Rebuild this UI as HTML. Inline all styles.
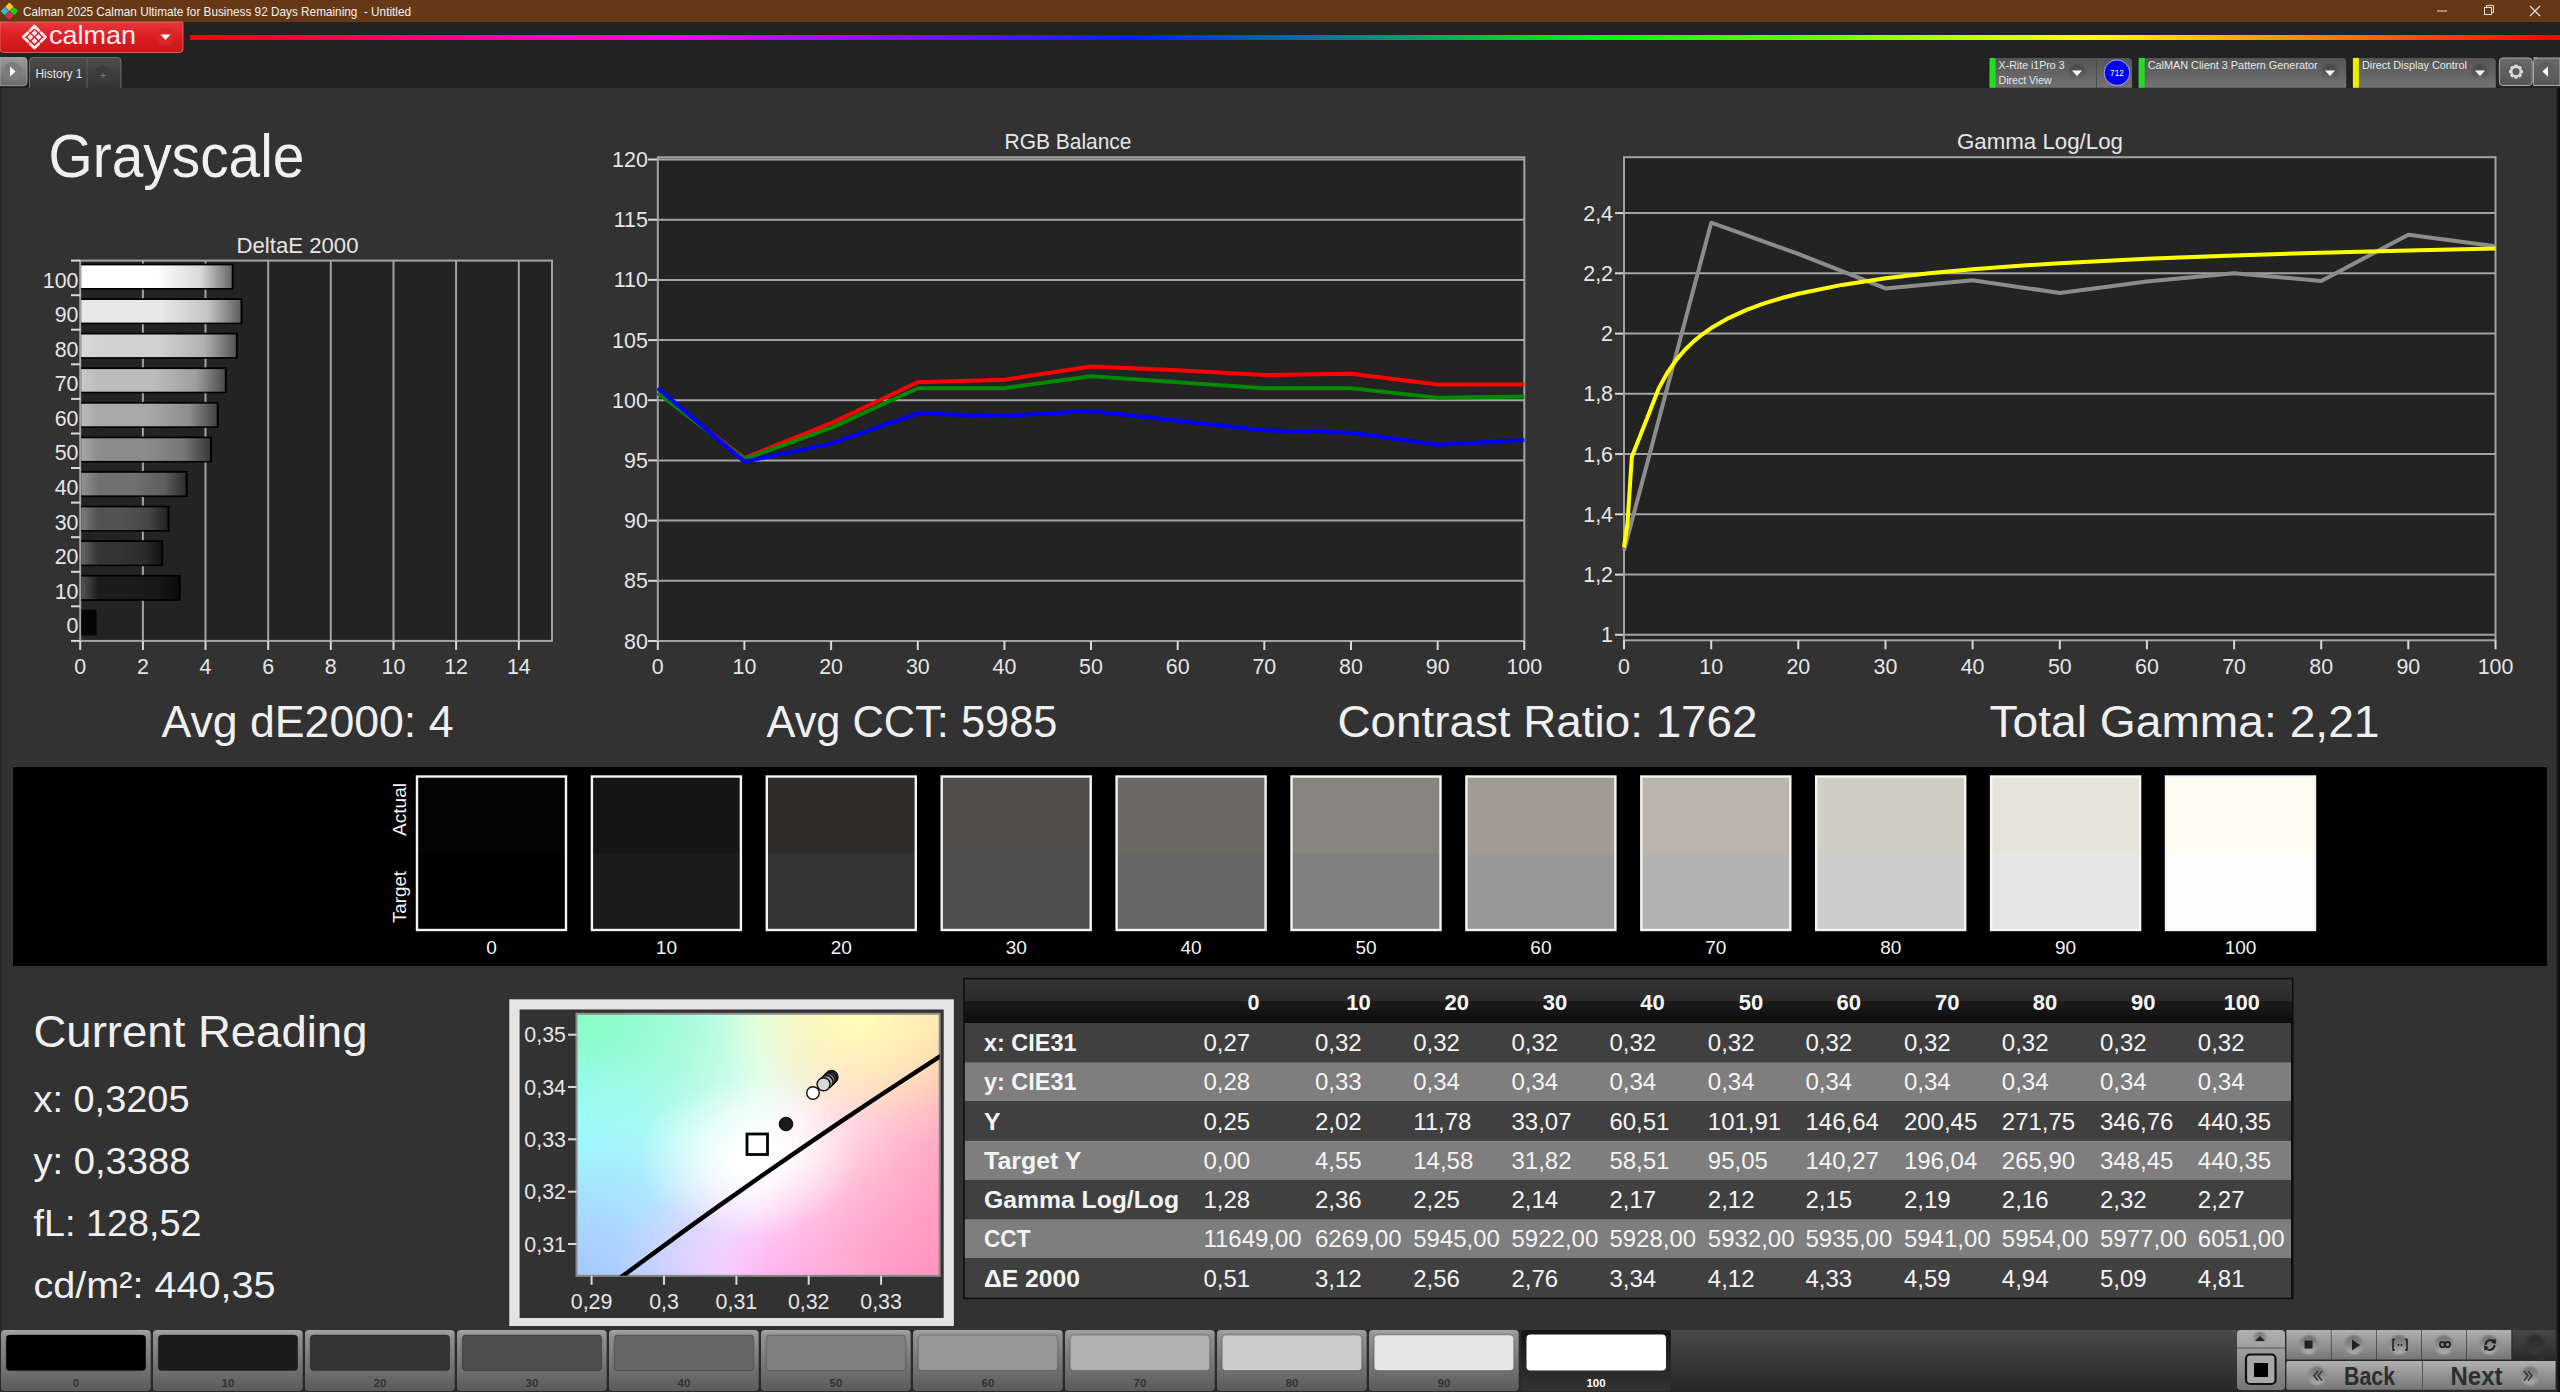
<!DOCTYPE html>
<html><head><meta charset="utf-8"><style>
html,body{margin:0;padding:0;width:2560px;height:1392px;overflow:hidden;background:#333;font-family:"Liberation Sans", sans-serif}
svg text{font-family:"Liberation Sans", sans-serif}
</style></head><body>
<div style="position:relative;width:2560px;height:1392px;overflow:hidden">
<div style="position:absolute;left:0px;top:0px;width:2560px;height:22px;background:#663816"></div><div style="position:absolute;left:0px;top:22px;width:2560px;height:66px;background:#222222"></div><div style="position:absolute;left:0px;top:88px;width:2560px;height:1242px;background:#323232"></div><div style="position:absolute;left:0px;top:1330px;width:2560px;height:62px;background:#323232"></div>
<svg width="2560" height="1392" viewBox="0 0 2560 1392" style="position:absolute;left:0;top:0">
<defs><linearGradient id="gRed" x1="0" y1="0" x2="0" y2="1"><stop offset="0" stop-color="#e8383c"/><stop offset="0.5" stop-color="#dc1e22"/><stop offset="1" stop-color="#c8161a"/></linearGradient><linearGradient id="gRain" x1="190" y1="0" x2="2560" y2="0" gradientUnits="userSpaceOnUse"><stop offset="0" stop-color="#ff0000"/><stop offset="0.2" stop-color="#ff00ff"/><stop offset="0.4" stop-color="#0020ff"/><stop offset="0.6" stop-color="#00ff00"/><stop offset="0.8" stop-color="#ffff00"/><stop offset="1" stop-color="#ff0000"/></linearGradient><linearGradient id="gBtnL" x1="0" y1="0" x2="0" y2="1"><stop offset="0" stop-color="#9a9a9a"/><stop offset="1" stop-color="#6a6a6a"/></linearGradient><linearGradient id="gTab" x1="0" y1="0" x2="0" y2="1"><stop offset="0" stop-color="#4c4c4c"/><stop offset="1" stop-color="#333333"/></linearGradient><linearGradient id="gDev" x1="0" y1="0" x2="0" y2="1"><stop offset="0" stop-color="#555555"/><stop offset="0.5" stop-color="#636363"/><stop offset="1" stop-color="#737373"/></linearGradient><linearGradient id="gDrop" x1="0" y1="0" x2="0" y2="1"><stop offset="0" stop-color="#454545"/><stop offset="0.6" stop-color="#5a5a5a"/><stop offset="1" stop-color="#707070"/></linearGradient><linearGradient id="gGear" x1="0" y1="0" x2="0" y2="1"><stop offset="0" stop-color="#6a6a6a"/><stop offset="1" stop-color="#555"/></linearGradient><linearGradient id="gBar10" x1="80.2" y1="0" x2="230.9" y2="0" gradientUnits="userSpaceOnUse"><stop offset="0" stop-color="rgb(255,255,255)"/><stop offset="0.119" stop-color="rgb(255,255,255)"/><stop offset="0.5" stop-color="rgb(255,255,255)"/><stop offset="0.8" stop-color="rgb(216,216,216)"/><stop offset="1" stop-color="rgb(107,107,107)"/></linearGradient><linearGradient id="gBar9" x1="80.2" y1="0" x2="239.7" y2="0" gradientUnits="userSpaceOnUse"><stop offset="0" stop-color="rgb(232,232,232)"/><stop offset="0.113" stop-color="rgb(232,232,232)"/><stop offset="0.5" stop-color="rgb(232,232,232)"/><stop offset="0.8" stop-color="rgb(197,197,197)"/><stop offset="1" stop-color="rgb(97,97,97)"/></linearGradient><linearGradient id="gBar8" x1="80.2" y1="0" x2="235.0" y2="0" gradientUnits="userSpaceOnUse"><stop offset="0" stop-color="rgb(217,217,217)"/><stop offset="0.116" stop-color="rgb(210,210,210)"/><stop offset="0.5" stop-color="rgb(210,210,210)"/><stop offset="0.8" stop-color="rgb(178,178,178)"/><stop offset="1" stop-color="rgb(88,88,88)"/></linearGradient><linearGradient id="gBar7" x1="80.2" y1="0" x2="224.0" y2="0" gradientUnits="userSpaceOnUse"><stop offset="0" stop-color="rgb(201,201,201)"/><stop offset="0.125" stop-color="rgb(188,188,188)"/><stop offset="0.5" stop-color="rgb(188,188,188)"/><stop offset="0.8" stop-color="rgb(159,159,159)"/><stop offset="1" stop-color="rgb(78,78,78)"/></linearGradient><linearGradient id="gBar6" x1="80.2" y1="0" x2="215.9" y2="0" gradientUnits="userSpaceOnUse"><stop offset="0" stop-color="rgb(187,187,187)"/><stop offset="0.133" stop-color="rgb(168,168,168)"/><stop offset="0.5" stop-color="rgb(168,168,168)"/><stop offset="0.8" stop-color="rgb(142,142,142)"/><stop offset="1" stop-color="rgb(70,70,70)"/></linearGradient><linearGradient id="gBar5" x1="80.2" y1="0" x2="209.3" y2="0" gradientUnits="userSpaceOnUse"><stop offset="0" stop-color="rgb(168,168,168)"/><stop offset="0.139" stop-color="rgb(140,140,140)"/><stop offset="0.5" stop-color="rgb(140,140,140)"/><stop offset="0.8" stop-color="rgb(119,119,119)"/><stop offset="1" stop-color="rgb(58,58,58)"/></linearGradient><linearGradient id="gBar4" x1="80.2" y1="0" x2="184.8" y2="0" gradientUnits="userSpaceOnUse"><stop offset="0" stop-color="rgb(148,148,148)"/><stop offset="0.172" stop-color="rgb(112,112,112)"/><stop offset="0.5" stop-color="rgb(112,112,112)"/><stop offset="0.8" stop-color="rgb(95,95,95)"/><stop offset="1" stop-color="rgb(47,47,47)"/></linearGradient><linearGradient id="gBar3" x1="80.2" y1="0" x2="166.7" y2="0" gradientUnits="userSpaceOnUse"><stop offset="0" stop-color="rgb(127,127,127)"/><stop offset="0.208" stop-color="rgb(82,82,82)"/><stop offset="0.5" stop-color="rgb(82,82,82)"/><stop offset="0.8" stop-color="rgb(69,69,69)"/><stop offset="1" stop-color="rgb(34,34,34)"/></linearGradient><linearGradient id="gBar2" x1="80.2" y1="0" x2="160.4" y2="0" gradientUnits="userSpaceOnUse"><stop offset="0" stop-color="rgb(106,106,106)"/><stop offset="0.224" stop-color="rgb(52,52,52)"/><stop offset="0.5" stop-color="rgb(52,52,52)"/><stop offset="0.8" stop-color="rgb(44,44,44)"/><stop offset="1" stop-color="rgb(21,21,21)"/></linearGradient><linearGradient id="gBar1" x1="80.2" y1="0" x2="177.9" y2="0" gradientUnits="userSpaceOnUse"><stop offset="0" stop-color="rgb(89,89,89)"/><stop offset="0.184" stop-color="rgb(28,28,28)"/><stop offset="0.5" stop-color="rgb(28,28,28)"/><stop offset="0.8" stop-color="rgb(23,23,23)"/><stop offset="1" stop-color="rgb(11,11,11)"/></linearGradient><linearGradient id="gBar0" x1="80.2" y1="0" x2="96.2" y2="0" gradientUnits="userSpaceOnUse"><stop offset="0" stop-color="rgb(74,74,74)"/><stop offset="0.250" stop-color="rgb(6,6,6)"/><stop offset="0.5" stop-color="rgb(6,6,6)"/><stop offset="0.8" stop-color="rgb(5,5,5)"/><stop offset="1" stop-color="rgb(2,2,2)"/></linearGradient><linearGradient id="cieBase" x1="0" y1="0" x2="1" y2="0"><stop offset="0" stop-color="#a8e8ff"/><stop offset="0.5" stop-color="#ffffff"/><stop offset="1" stop-color="#ffb0c8"/></linearGradient><radialGradient id="cieG" cx="0" cy="0" r="0.75"><stop offset="0" stop-color="#88ffc4" stop-opacity="1"/><stop offset="1" stop-color="#80ffc0" stop-opacity="0"/></radialGradient><radialGradient id="cieC" cx="0" cy="0.55" r="0.45"><stop offset="0" stop-color="#a0ffff" stop-opacity="1"/><stop offset="1" stop-color="#a0ffff" stop-opacity="0"/></radialGradient><radialGradient id="cieB" cx="0" cy="1" r="0.6"><stop offset="0" stop-color="#a8c8ff" stop-opacity="1"/><stop offset="1" stop-color="#a8c8ff" stop-opacity="0"/></radialGradient><radialGradient id="cieM" cx="0.55" cy="1" r="0.45"><stop offset="0" stop-color="#ffc0ff" stop-opacity="1"/><stop offset="1" stop-color="#ffc0ff" stop-opacity="0"/></radialGradient><radialGradient id="cieP" cx="1" cy="1" r="0.6"><stop offset="0" stop-color="#ff96c0" stop-opacity="1"/><stop offset="1" stop-color="#ff88b8" stop-opacity="0"/></radialGradient><radialGradient id="cieO" cx="1" cy="0" r="0.5"><stop offset="0" stop-color="#ffd8a8" stop-opacity="1"/><stop offset="1" stop-color="#ffd8a8" stop-opacity="0"/></radialGradient><radialGradient id="cieY" cx="0.78" cy="0.02" r="0.4"><stop offset="0" stop-color="#ffffb8" stop-opacity="1"/><stop offset="1" stop-color="#ffffb8" stop-opacity="0"/></radialGradient><radialGradient id="cieW" cx="0.47" cy="0.55" r="0.3"><stop offset="0" stop-color="#ffffff" stop-opacity="1"/><stop offset="1" stop-color="#ffffff" stop-opacity="0"/></radialGradient><linearGradient id="gHdr" x1="0" y1="0" x2="0" y2="1"><stop offset="0" stop-color="#343434"/><stop offset="0.5" stop-color="#2a2a2a"/><stop offset="0.5" stop-color="#1c1c1c"/><stop offset="1" stop-color="#0c0c0c"/></linearGradient><linearGradient id="gBB" x1="0" y1="0" x2="0" y2="1"><stop offset="0" stop-color="#a4a4a4"/><stop offset="0.1" stop-color="#909090"/><stop offset="0.7" stop-color="#6e6e6e"/><stop offset="1" stop-color="#5a5a5a"/></linearGradient><linearGradient id="gBBsel" x1="0" y1="0" x2="0" y2="1"><stop offset="0" stop-color="#161616"/><stop offset="1" stop-color="#333333"/></linearGradient><linearGradient id="gBBrest" x1="0" y1="0" x2="0" y2="1"><stop offset="0" stop-color="#4a4a4a"/><stop offset="1" stop-color="#262626"/></linearGradient><linearGradient id="gCtl" x1="0" y1="0" x2="0" y2="1"><stop offset="0" stop-color="#b0b0b0"/><stop offset="1" stop-color="#767676"/></linearGradient><linearGradient id="gKnob" x1="0" y1="0" x2="0" y2="1"><stop offset="0" stop-color="#6e6e6e"/><stop offset="0.55" stop-color="#8e8e8e"/><stop offset="1" stop-color="#b4b4b4"/></linearGradient><linearGradient id="gDarkBtn" x1="0" y1="0" x2="0" y2="1"><stop offset="0" stop-color="#474747"/><stop offset="1" stop-color="#2a2a2a"/></linearGradient><linearGradient id="gDarkKnob" x1="0" y1="0" x2="0" y2="1"><stop offset="0" stop-color="#2a2a2a"/><stop offset="1" stop-color="#3a3a3a"/></linearGradient><filter id="fBlur" x="-20%" y="-20%" width="140%" height="140%"><feGaussianBlur stdDeviation="0.8"/></filter><linearGradient id="gRS" x1="0" y1="0" x2="1" y2="0"><stop offset="0" stop-color="#333"/><stop offset="0.65" stop-color="#121212"/><stop offset="1" stop-color="#0e0e0e"/></linearGradient></defs>
<text x="23.0" y="16.3" font-size="13" textLength="388.0" lengthAdjust="spacingAndGlyphs" fill="#f2f2f2">Calman 2025 Calman Ultimate for Business 92 Days Remaining  - Untitled</text><line x1="2437.0" y1="11.0" x2="2447.0" y2="11.0" stroke="#e0e0e0" stroke-width="1"/><rect x="2484.5" y="7.5" width="7" height="7" fill="none" stroke="#e0e0e0" stroke-width="1"/><path d="M2486.5 7.5 V5.5 H2493.5 V12.5 H2491.5" fill="none" stroke="#e0e0e0" stroke-width="1"/><line x1="2530.0" y1="6.0" x2="2540.0" y2="16.0" stroke="#e0e0e0" stroke-width="1.2"/><line x1="2540.0" y1="6.0" x2="2530.0" y2="16.0" stroke="#e0e0e0" stroke-width="1.2"/><path d="M9.4 2.5999999999999996 L13.600000000000001 6.8 L9.4 11.0 L5.2 6.8 Z" fill="#f4c82a"/><path d="M4.7 6.8999999999999995 L8.9 11.1 L4.7 15.3 L0.5 11.1 Z" fill="#3cb4e0"/><path d="M14 6.8999999999999995 L18.2 11.1 L14 15.3 L9.8 11.1 Z" fill="#22c822"/><path d="M9.3 11.399999999999999 L13.5 15.6 L9.3 19.8 L5.1000000000000005 15.6 Z" fill="#e02a52"/><path d="M0 22 H183 V49 Q183 52.5 179.5 52.5 H3.5 Q0 52.5 0 49 Z" fill="url(#gRed)" stroke="#f06a6a" stroke-width="0.8"/><path d="M30.00 30.50 L34.40 26.10 L38.80 30.50 M41.00 32.70 L45.40 37.10 L41.00 41.50 M38.80 43.70 L34.40 48.10 L30.00 43.70 M27.80 41.50 L23.40 37.10 L27.80 32.70" fill="none" stroke="#fdecec" stroke-width="2.8" stroke-linecap="round" stroke-linejoin="round"/><g fill="#fdecec" stroke="#fdecec" stroke-width="0.8" stroke-linejoin="round"><path d="M34.40 30.60 L37.00 33.20 L34.40 35.80 L31.80 33.20 Z"/><path d="M30.30 34.50 L32.90 37.10 L30.30 39.70 L27.70 37.10 Z"/><path d="M38.50 34.50 L41.10 37.10 L38.50 39.70 L35.90 37.10 Z"/><path d="M34.40 38.40 L37.00 41.00 L34.40 43.60 L31.80 41.00 Z"/></g><text x="49.0" y="43.6" font-size="26" textLength="87.0" lengthAdjust="spacingAndGlyphs" fill="#fdeeee" letter-spacing="0">calman</text><circle cx="165.6" cy="36.8" r="9" fill="#d8262a"/><path d="M160.5 34.5 H170.5 L165.5 40 Z" fill="#fff"/><rect x="190.0" y="35.0" width="2370.0" height="5.0" fill="url(#gRain)"/><path d="M0 57.5 H23.5 Q27 57.5 27 61 V82 Q27 85.6 23.5 85.6 H0 Z" fill="url(#gBtnL)" stroke="#b0b0b0" stroke-width="0.8"/><circle cx="12.5" cy="71.5" r="9.5" fill="#7c7c7c"/><path d="M10 66.5 L15.5 71.5 L10 76.5 Z" fill="#fff"/><path d="M29.5 88 V61 Q29.5 57.5 33 57.5 H117.5 Q121 57.5 121 61 V88" fill="url(#gTab)" stroke="#7a7a7a" stroke-width="0.8"/><line x1="87.0" y1="58.0" x2="87.0" y2="88.0" stroke="#6a6a6a" stroke-width="0.8"/><text x="35.5" y="78.2" font-size="12" textLength="47.0" lengthAdjust="spacingAndGlyphs" fill="#e6e6e6">History 1</text><circle cx="103" cy="74.5" r="9" fill="#3c3c3c"/><path d="M100.5 75.5 H105.5 M103 73 V78" stroke="#777" stroke-width="1"/><path d="M1989.6 87.7 V61 Q1989.6 57.9 1992.6 57.9 H2128 Q2132 57.9 2132 61.9 V87.7 Z" fill="url(#gDev)"/><rect x="1989.6" y="57.9" width="6.0" height="29.8" fill="#22dd22"/><text x="1998.6" y="69.3" font-size="10" textLength="66.0" lengthAdjust="spacingAndGlyphs" fill="#e8e8e8">X-Rite i1Pro 3</text><text x="1998.6" y="83.9" font-size="10" textLength="53.0" lengthAdjust="spacingAndGlyphs" fill="#e8e8e8">Direct View</text><circle cx="2077" cy="72.5" r="8.5" fill="url(#gDrop)" filter="url(#fBlur)"/><path d="M2072 70.5 H2082 L2077 76 Z" fill="#fff"/><line x1="2096.5" y1="61.0" x2="2096.5" y2="87.7" stroke="#4a4a4a" stroke-width="1"/><circle cx="2117" cy="72.7" r="12.8" fill="#0000ee" stroke="#c8c8ff" stroke-width="0.8"/><text x="2117.0" y="76.0" font-size="9" text-anchor="middle" textLength="14.0" lengthAdjust="spacingAndGlyphs" fill="#fff">712</text><path d="M2138.7 87.7 V61 Q2138.7 57.9 2141.7 57.9 H2342.2 Q2346.2 57.9 2346.2 61.9 V87.7 Z" fill="url(#gDev)"/><rect x="2138.7" y="57.9" width="6.0" height="29.8" fill="#22dd22"/><text x="2147.7" y="69.3" font-size="10" textLength="170.0" lengthAdjust="spacingAndGlyphs" fill="#e8e8e8">CalMAN Client 3 Pattern Generator</text><circle cx="2330" cy="72.5" r="8.5" fill="url(#gDrop)" filter="url(#fBlur)"/><path d="M2325 70.5 H2335 L2330 76 Z" fill="#fff"/><path d="M2352.9 87.7 V61 Q2352.9 57.9 2355.9 57.9 H2491.8 Q2495.8 57.9 2495.8 61.9 V87.7 Z" fill="url(#gDev)"/><rect x="2352.9" y="57.9" width="6.0" height="29.8" fill="#eeee00"/><text x="2361.9" y="69.3" font-size="10" textLength="105.0" lengthAdjust="spacingAndGlyphs" fill="#e8e8e8">Direct Display Control</text><circle cx="2480" cy="72.5" r="8.5" fill="url(#gDrop)" filter="url(#fBlur)"/><path d="M2475 70.5 H2485 L2480 76 Z" fill="#fff"/><rect x="2499.4" y="58" width="32.8" height="27.5" rx="3.5" fill="url(#gGear)" stroke="#a8a8a8" stroke-width="1"/><circle cx="2516" cy="71.6" r="9.5" fill="#5e5e5e"/><g transform="translate(2516,71.6)" fill="#d8d8d8"><rect x="-1.6" y="-7" width="3.2" height="3" transform="rotate(0)"/><rect x="-1.6" y="-7" width="3.2" height="3" transform="rotate(45)"/><rect x="-1.6" y="-7" width="3.2" height="3" transform="rotate(90)"/><rect x="-1.6" y="-7" width="3.2" height="3" transform="rotate(135)"/><rect x="-1.6" y="-7" width="3.2" height="3" transform="rotate(180)"/><rect x="-1.6" y="-7" width="3.2" height="3" transform="rotate(225)"/><rect x="-1.6" y="-7" width="3.2" height="3" transform="rotate(270)"/><rect x="-1.6" y="-7" width="3.2" height="3" transform="rotate(315)"/><circle r="4.8" fill="none" stroke="#d8d8d8" stroke-width="2.4"/></g><path d="M2533.5 58 H2560 V85.5 H2533.5 Q2533.5 85.5 2533.5 82 V61.5 Q2533.5 58 2537 58 Z" fill="url(#gGear)" stroke="#a8a8a8" stroke-width="1"/><circle cx="2546" cy="71.6" r="9.5" fill="#5e5e5e"/><path d="M2548 66.5 L2542.5 71.6 L2548 76.7 Z" fill="#fff"/><rect x="0.0" y="88.0" width="1.3" height="1304.0" fill="#242424"/><text x="48.5" y="176.8" font-size="62" textLength="256.0" lengthAdjust="spacingAndGlyphs" fill="#f0f0f0">Grayscale</text><text x="236.5" y="252.9" font-size="21.4" textLength="122.0" lengthAdjust="spacingAndGlyphs" fill="#e6e6e6">DeltaE 2000</text><rect x="80.2" y="260.6" width="471.8" height="380.3" fill="#232323"/><line x1="142.9" y1="260.6" x2="142.9" y2="640.9" stroke="#a3a3a3" stroke-width="2"/><line x1="205.5" y1="260.6" x2="205.5" y2="640.9" stroke="#a3a3a3" stroke-width="2"/><line x1="268.2" y1="260.6" x2="268.2" y2="640.9" stroke="#a3a3a3" stroke-width="2"/><line x1="330.8" y1="260.6" x2="330.8" y2="640.9" stroke="#a3a3a3" stroke-width="2"/><line x1="393.5" y1="260.6" x2="393.5" y2="640.9" stroke="#a3a3a3" stroke-width="2"/><line x1="456.1" y1="260.6" x2="456.1" y2="640.9" stroke="#a3a3a3" stroke-width="2"/><line x1="518.8" y1="260.6" x2="518.8" y2="640.9" stroke="#a3a3a3" stroke-width="2"/><rect x="80.2" y="260.6" width="471.8" height="380.3" fill="none" stroke="#a3a3a3" stroke-width="2"/><line x1="71.0" y1="260.6" x2="80.2" y2="260.6" stroke="#d8d8d8" stroke-width="2"/><line x1="71.0" y1="295.2" x2="80.2" y2="295.2" stroke="#d8d8d8" stroke-width="2"/><line x1="71.0" y1="329.7" x2="80.2" y2="329.7" stroke="#d8d8d8" stroke-width="2"/><line x1="71.0" y1="364.3" x2="80.2" y2="364.3" stroke="#d8d8d8" stroke-width="2"/><line x1="71.0" y1="398.9" x2="80.2" y2="398.9" stroke="#d8d8d8" stroke-width="2"/><line x1="71.0" y1="433.5" x2="80.2" y2="433.5" stroke="#d8d8d8" stroke-width="2"/><line x1="71.0" y1="468.0" x2="80.2" y2="468.0" stroke="#d8d8d8" stroke-width="2"/><line x1="71.0" y1="502.6" x2="80.2" y2="502.6" stroke="#d8d8d8" stroke-width="2"/><line x1="71.0" y1="537.2" x2="80.2" y2="537.2" stroke="#d8d8d8" stroke-width="2"/><line x1="71.0" y1="571.8" x2="80.2" y2="571.8" stroke="#d8d8d8" stroke-width="2"/><line x1="71.0" y1="606.3" x2="80.2" y2="606.3" stroke="#d8d8d8" stroke-width="2"/><line x1="71.0" y1="640.9" x2="80.2" y2="640.9" stroke="#d8d8d8" stroke-width="2"/><line x1="80.2" y1="640.9" x2="80.2" y2="649.9" stroke="#d8d8d8" stroke-width="2"/><text x="80.2" y="674.0" font-size="21.4" text-anchor="middle" fill="#e6e6e6">0</text><line x1="142.9" y1="640.9" x2="142.9" y2="649.9" stroke="#d8d8d8" stroke-width="2"/><text x="142.9" y="674.0" font-size="21.4" text-anchor="middle" fill="#e6e6e6">2</text><line x1="205.5" y1="640.9" x2="205.5" y2="649.9" stroke="#d8d8d8" stroke-width="2"/><text x="205.5" y="674.0" font-size="21.4" text-anchor="middle" fill="#e6e6e6">4</text><line x1="268.2" y1="640.9" x2="268.2" y2="649.9" stroke="#d8d8d8" stroke-width="2"/><text x="268.2" y="674.0" font-size="21.4" text-anchor="middle" fill="#e6e6e6">6</text><line x1="330.8" y1="640.9" x2="330.8" y2="649.9" stroke="#d8d8d8" stroke-width="2"/><text x="330.8" y="674.0" font-size="21.4" text-anchor="middle" fill="#e6e6e6">8</text><line x1="393.5" y1="640.9" x2="393.5" y2="649.9" stroke="#d8d8d8" stroke-width="2"/><text x="393.5" y="674.0" font-size="21.4" text-anchor="middle" fill="#e6e6e6">10</text><line x1="456.1" y1="640.9" x2="456.1" y2="649.9" stroke="#d8d8d8" stroke-width="2"/><text x="456.1" y="674.0" font-size="21.4" text-anchor="middle" fill="#e6e6e6">12</text><line x1="518.8" y1="640.9" x2="518.8" y2="649.9" stroke="#d8d8d8" stroke-width="2"/><text x="518.8" y="674.0" font-size="21.4" text-anchor="middle" fill="#e6e6e6">14</text><text x="78.5" y="287.5" font-size="21.4" text-anchor="end" fill="#e6e6e6">100</text><rect x="81.2" y="263.6" width="152.5" height="26.0" fill="#000"/><rect x="81.2" y="265.4" width="150.5" height="22.6" fill="url(#gBar10)"/><text x="78.5" y="322.1" font-size="21.4" text-anchor="end" fill="#e6e6e6">90</text><rect x="81.2" y="298.2" width="161.3" height="26.0" fill="#000"/><rect x="81.2" y="300.0" width="159.3" height="22.6" fill="url(#gBar9)"/><text x="78.5" y="356.6" font-size="21.4" text-anchor="end" fill="#e6e6e6">80</text><rect x="81.2" y="332.7" width="156.6" height="26.0" fill="#000"/><rect x="81.2" y="334.5" width="154.6" height="22.6" fill="url(#gBar8)"/><text x="78.5" y="391.2" font-size="21.4" text-anchor="end" fill="#e6e6e6">70</text><rect x="81.2" y="367.3" width="145.6" height="26.0" fill="#000"/><rect x="81.2" y="369.1" width="143.6" height="22.6" fill="url(#gBar7)"/><text x="78.5" y="425.8" font-size="21.4" text-anchor="end" fill="#e6e6e6">60</text><rect x="81.2" y="401.9" width="137.5" height="26.0" fill="#000"/><rect x="81.2" y="403.7" width="135.5" height="22.6" fill="url(#gBar6)"/><text x="78.5" y="460.4" font-size="21.4" text-anchor="end" fill="#e6e6e6">50</text><rect x="81.2" y="436.5" width="130.9" height="26.0" fill="#000"/><rect x="81.2" y="438.3" width="128.9" height="22.6" fill="url(#gBar5)"/><text x="78.5" y="494.9" font-size="21.4" text-anchor="end" fill="#e6e6e6">40</text><rect x="81.2" y="471.0" width="106.4" height="26.0" fill="#000"/><rect x="81.2" y="472.8" width="104.4" height="22.6" fill="url(#gBar4)"/><text x="78.5" y="529.5" font-size="21.4" text-anchor="end" fill="#e6e6e6">30</text><rect x="81.2" y="505.6" width="88.3" height="26.0" fill="#000"/><rect x="81.2" y="507.4" width="86.3" height="22.6" fill="url(#gBar3)"/><text x="78.5" y="564.1" font-size="21.4" text-anchor="end" fill="#e6e6e6">20</text><rect x="81.2" y="540.2" width="82.0" height="26.0" fill="#000"/><rect x="81.2" y="542.0" width="80.0" height="22.6" fill="url(#gBar2)"/><text x="78.5" y="598.6" font-size="21.4" text-anchor="end" fill="#e6e6e6">10</text><rect x="81.2" y="574.8" width="99.5" height="26.0" fill="#000"/><rect x="81.2" y="576.6" width="97.5" height="22.6" fill="url(#gBar1)"/><text x="78.5" y="633.2" font-size="21.4" text-anchor="end" fill="#e6e6e6">0</text><rect x="81.4" y="609.7" width="15.2" height="25.6" fill="#050505"/><text x="1004.5" y="149.1" font-size="21.4" textLength="127.0" lengthAdjust="spacingAndGlyphs" fill="#e6e6e6">RGB Balance</text><rect x="657.8" y="157.3" width="866.5" height="483.7" fill="#232323"/><line x1="657.8" y1="641.0" x2="1524.3" y2="641.0" stroke="#a3a3a3" stroke-width="2"/><line x1="648.0" y1="641.0" x2="657.8" y2="641.0" stroke="#d8d8d8" stroke-width="2"/><text x="647.8" y="648.5" font-size="21.4" text-anchor="end" fill="#e6e6e6">80</text><line x1="657.8" y1="580.8" x2="1524.3" y2="580.8" stroke="#a3a3a3" stroke-width="2"/><line x1="648.0" y1="580.8" x2="657.8" y2="580.8" stroke="#d8d8d8" stroke-width="2"/><text x="647.8" y="588.3" font-size="21.4" text-anchor="end" fill="#e6e6e6">85</text><line x1="657.8" y1="520.6" x2="1524.3" y2="520.6" stroke="#a3a3a3" stroke-width="2"/><line x1="648.0" y1="520.6" x2="657.8" y2="520.6" stroke="#d8d8d8" stroke-width="2"/><text x="647.8" y="528.1" font-size="21.4" text-anchor="end" fill="#e6e6e6">90</text><line x1="657.8" y1="460.4" x2="1524.3" y2="460.4" stroke="#a3a3a3" stroke-width="2"/><line x1="648.0" y1="460.4" x2="657.8" y2="460.4" stroke="#d8d8d8" stroke-width="2"/><text x="647.8" y="467.9" font-size="21.4" text-anchor="end" fill="#e6e6e6">95</text><line x1="657.8" y1="400.2" x2="1524.3" y2="400.2" stroke="#a3a3a3" stroke-width="2"/><line x1="648.0" y1="400.2" x2="657.8" y2="400.2" stroke="#d8d8d8" stroke-width="2"/><text x="647.8" y="407.8" font-size="21.4" text-anchor="end" fill="#e6e6e6">100</text><line x1="657.8" y1="340.1" x2="1524.3" y2="340.1" stroke="#a3a3a3" stroke-width="2"/><line x1="648.0" y1="340.1" x2="657.8" y2="340.1" stroke="#d8d8d8" stroke-width="2"/><text x="647.8" y="347.6" font-size="21.4" text-anchor="end" fill="#e6e6e6">105</text><line x1="657.8" y1="279.9" x2="1524.3" y2="279.9" stroke="#a3a3a3" stroke-width="2"/><line x1="648.0" y1="279.9" x2="657.8" y2="279.9" stroke="#d8d8d8" stroke-width="2"/><text x="647.8" y="287.4" font-size="21.4" text-anchor="end" fill="#e6e6e6">110</text><line x1="657.8" y1="219.7" x2="1524.3" y2="219.7" stroke="#a3a3a3" stroke-width="2"/><line x1="648.0" y1="219.7" x2="657.8" y2="219.7" stroke="#d8d8d8" stroke-width="2"/><text x="647.8" y="227.2" font-size="21.4" text-anchor="end" fill="#e6e6e6">115</text><line x1="657.8" y1="159.5" x2="1524.3" y2="159.5" stroke="#a3a3a3" stroke-width="2"/><line x1="648.0" y1="159.5" x2="657.8" y2="159.5" stroke="#d8d8d8" stroke-width="2"/><text x="647.8" y="167.0" font-size="21.4" text-anchor="end" fill="#e6e6e6">120</text><rect x="657.8" y="157.3" width="866.5" height="483.7" fill="none" stroke="#a3a3a3" stroke-width="2"/><line x1="657.8" y1="641.0" x2="657.8" y2="650.0" stroke="#d8d8d8" stroke-width="2"/><text x="657.8" y="674.0" font-size="21.4" text-anchor="middle" fill="#e6e6e6">0</text><line x1="744.4" y1="641.0" x2="744.4" y2="650.0" stroke="#d8d8d8" stroke-width="2"/><text x="744.4" y="674.0" font-size="21.4" text-anchor="middle" fill="#e6e6e6">10</text><line x1="831.1" y1="641.0" x2="831.1" y2="650.0" stroke="#d8d8d8" stroke-width="2"/><text x="831.1" y="674.0" font-size="21.4" text-anchor="middle" fill="#e6e6e6">20</text><line x1="917.8" y1="641.0" x2="917.8" y2="650.0" stroke="#d8d8d8" stroke-width="2"/><text x="917.8" y="674.0" font-size="21.4" text-anchor="middle" fill="#e6e6e6">30</text><line x1="1004.4" y1="641.0" x2="1004.4" y2="650.0" stroke="#d8d8d8" stroke-width="2"/><text x="1004.4" y="674.0" font-size="21.4" text-anchor="middle" fill="#e6e6e6">40</text><line x1="1091.0" y1="641.0" x2="1091.0" y2="650.0" stroke="#d8d8d8" stroke-width="2"/><text x="1091.0" y="674.0" font-size="21.4" text-anchor="middle" fill="#e6e6e6">50</text><line x1="1177.7" y1="641.0" x2="1177.7" y2="650.0" stroke="#d8d8d8" stroke-width="2"/><text x="1177.7" y="674.0" font-size="21.4" text-anchor="middle" fill="#e6e6e6">60</text><line x1="1264.3" y1="641.0" x2="1264.3" y2="650.0" stroke="#d8d8d8" stroke-width="2"/><text x="1264.3" y="674.0" font-size="21.4" text-anchor="middle" fill="#e6e6e6">70</text><line x1="1351.0" y1="641.0" x2="1351.0" y2="650.0" stroke="#d8d8d8" stroke-width="2"/><text x="1351.0" y="674.0" font-size="21.4" text-anchor="middle" fill="#e6e6e6">80</text><line x1="1437.7" y1="641.0" x2="1437.7" y2="650.0" stroke="#d8d8d8" stroke-width="2"/><text x="1437.7" y="674.0" font-size="21.4" text-anchor="middle" fill="#e6e6e6">90</text><line x1="1524.3" y1="641.0" x2="1524.3" y2="650.0" stroke="#d8d8d8" stroke-width="2"/><text x="1524.3" y="674.0" font-size="21.4" text-anchor="middle" fill="#e6e6e6">100</text><polyline points="657.8,393.0 744.4,458.0 831.1,423.1 917.8,382.2 1004.4,379.8 1091.0,366.5 1177.7,370.2 1264.3,375.0 1351.0,373.8 1437.7,384.6 1524.3,384.6" fill="none" stroke="#ff0000" stroke-width="4" stroke-linejoin="round"/><polyline points="657.8,393.0 744.4,459.2 831.1,427.9 917.8,388.2 1004.4,388.2 1091.0,376.2 1177.7,382.2 1264.3,388.2 1351.0,388.2 1437.7,397.8 1524.3,396.6" fill="none" stroke="#008800" stroke-width="4" stroke-linejoin="round"/><polyline points="657.8,388.2 744.4,461.6 831.1,443.6 917.8,413.5 1004.4,415.9 1091.0,411.1 1177.7,420.7 1264.3,430.3 1351.0,432.8 1437.7,444.8 1524.3,440.0" fill="none" stroke="#0000ff" stroke-width="4" stroke-linejoin="round"/><text x="1957.0" y="149.1" font-size="21.4" textLength="166.0" lengthAdjust="spacingAndGlyphs" fill="#e6e6e6">Gamma Log/Log</text><rect x="1624.0" y="157.2" width="871.5" height="483.1" fill="#232323"/><line x1="1624.0" y1="634.8" x2="2495.5" y2="634.8" stroke="#a3a3a3" stroke-width="2"/><line x1="1615.0" y1="634.8" x2="1624.0" y2="634.8" stroke="#d8d8d8" stroke-width="2"/><text x="1613.0" y="642.3" font-size="21.4" text-anchor="end" fill="#e6e6e6">1</text><line x1="1624.0" y1="574.6" x2="2495.5" y2="574.6" stroke="#a3a3a3" stroke-width="2"/><line x1="1615.0" y1="574.6" x2="1624.0" y2="574.6" stroke="#d8d8d8" stroke-width="2"/><text x="1613.0" y="582.1" font-size="21.4" text-anchor="end" fill="#e6e6e6">1,2</text><line x1="1624.0" y1="514.3" x2="2495.5" y2="514.3" stroke="#a3a3a3" stroke-width="2"/><line x1="1615.0" y1="514.3" x2="1624.0" y2="514.3" stroke="#d8d8d8" stroke-width="2"/><text x="1613.0" y="521.8" font-size="21.4" text-anchor="end" fill="#e6e6e6">1,4</text><line x1="1624.0" y1="454.1" x2="2495.5" y2="454.1" stroke="#a3a3a3" stroke-width="2"/><line x1="1615.0" y1="454.1" x2="1624.0" y2="454.1" stroke="#d8d8d8" stroke-width="2"/><text x="1613.0" y="461.6" font-size="21.4" text-anchor="end" fill="#e6e6e6">1,6</text><line x1="1624.0" y1="393.8" x2="2495.5" y2="393.8" stroke="#a3a3a3" stroke-width="2"/><line x1="1615.0" y1="393.8" x2="1624.0" y2="393.8" stroke="#d8d8d8" stroke-width="2"/><text x="1613.0" y="401.3" font-size="21.4" text-anchor="end" fill="#e6e6e6">1,8</text><line x1="1624.0" y1="333.6" x2="2495.5" y2="333.6" stroke="#a3a3a3" stroke-width="2"/><line x1="1615.0" y1="333.6" x2="1624.0" y2="333.6" stroke="#d8d8d8" stroke-width="2"/><text x="1613.0" y="341.1" font-size="21.4" text-anchor="end" fill="#e6e6e6">2</text><line x1="1624.0" y1="273.3" x2="2495.5" y2="273.3" stroke="#a3a3a3" stroke-width="2"/><line x1="1615.0" y1="273.3" x2="1624.0" y2="273.3" stroke="#d8d8d8" stroke-width="2"/><text x="1613.0" y="280.8" font-size="21.4" text-anchor="end" fill="#e6e6e6">2,2</text><line x1="1624.0" y1="213.1" x2="2495.5" y2="213.1" stroke="#a3a3a3" stroke-width="2"/><line x1="1615.0" y1="213.1" x2="1624.0" y2="213.1" stroke="#d8d8d8" stroke-width="2"/><text x="1613.0" y="220.6" font-size="21.4" text-anchor="end" fill="#e6e6e6">2,4</text><rect x="1624.0" y="157.2" width="871.5" height="483.1" fill="none" stroke="#a3a3a3" stroke-width="2"/><line x1="1624.0" y1="640.3" x2="1624.0" y2="649.3" stroke="#d8d8d8" stroke-width="2"/><text x="1624.0" y="674.0" font-size="21.4" text-anchor="middle" fill="#e6e6e6">0</text><line x1="1711.2" y1="640.3" x2="1711.2" y2="649.3" stroke="#d8d8d8" stroke-width="2"/><text x="1711.2" y="674.0" font-size="21.4" text-anchor="middle" fill="#e6e6e6">10</text><line x1="1798.3" y1="640.3" x2="1798.3" y2="649.3" stroke="#d8d8d8" stroke-width="2"/><text x="1798.3" y="674.0" font-size="21.4" text-anchor="middle" fill="#e6e6e6">20</text><line x1="1885.5" y1="640.3" x2="1885.5" y2="649.3" stroke="#d8d8d8" stroke-width="2"/><text x="1885.5" y="674.0" font-size="21.4" text-anchor="middle" fill="#e6e6e6">30</text><line x1="1972.6" y1="640.3" x2="1972.6" y2="649.3" stroke="#d8d8d8" stroke-width="2"/><text x="1972.6" y="674.0" font-size="21.4" text-anchor="middle" fill="#e6e6e6">40</text><line x1="2059.8" y1="640.3" x2="2059.8" y2="649.3" stroke="#d8d8d8" stroke-width="2"/><text x="2059.8" y="674.0" font-size="21.4" text-anchor="middle" fill="#e6e6e6">50</text><line x1="2146.9" y1="640.3" x2="2146.9" y2="649.3" stroke="#d8d8d8" stroke-width="2"/><text x="2146.9" y="674.0" font-size="21.4" text-anchor="middle" fill="#e6e6e6">60</text><line x1="2234.1" y1="640.3" x2="2234.1" y2="649.3" stroke="#d8d8d8" stroke-width="2"/><text x="2234.1" y="674.0" font-size="21.4" text-anchor="middle" fill="#e6e6e6">70</text><line x1="2321.2" y1="640.3" x2="2321.2" y2="649.3" stroke="#d8d8d8" stroke-width="2"/><text x="2321.2" y="674.0" font-size="21.4" text-anchor="middle" fill="#e6e6e6">80</text><line x1="2408.3" y1="640.3" x2="2408.3" y2="649.3" stroke="#d8d8d8" stroke-width="2"/><text x="2408.3" y="674.0" font-size="21.4" text-anchor="middle" fill="#e6e6e6">90</text><line x1="2495.5" y1="640.3" x2="2495.5" y2="649.3" stroke="#d8d8d8" stroke-width="2"/><text x="2495.5" y="674.0" font-size="21.4" text-anchor="middle" fill="#e6e6e6">100</text><polyline points="1624.0,550.5 1711.2,222.7 1798.3,253.8 1885.5,288.4 1972.6,280.3 2059.8,292.9 2146.9,281.5 2234.1,273.3 2321.2,280.9 2408.3,234.8 2495.5,246.2" fill="none" stroke="#8c8c8c" stroke-width="4" stroke-linejoin="round"/><polyline points="1624.0,547.4 1627.5,523.4 1631.8,457.1 1647.5,417.2 1658.9,388.1 1667.6,372.3 1676.3,359.9 1685.0,349.8 1693.7,341.4 1702.4,334.3 1711.2,328.1 1728.6,318.1 1746.0,310.1 1763.4,303.7 1780.9,298.3 1798.3,293.8 1841.9,284.9 1885.5,278.3 1929.0,273.3 1972.6,269.2 2016.2,265.9 2059.8,263.2 2146.9,258.7 2234.1,255.4 2321.2,252.7 2408.3,250.5 2495.5,248.6" fill="none" stroke="#ffff00" stroke-width="4" stroke-linejoin="round"/><text x="161.5" y="737.0" font-size="44" textLength="292.0" lengthAdjust="spacingAndGlyphs" fill="#f0f0f0">Avg dE2000: 4</text><text x="766.5" y="737.0" font-size="44" textLength="291.0" lengthAdjust="spacingAndGlyphs" fill="#f0f0f0">Avg CCT: 5985</text><text x="1337.5" y="737.0" font-size="44" textLength="420.0" lengthAdjust="spacingAndGlyphs" fill="#f0f0f0">Contrast Ratio: 1762</text><text x="1989.5" y="737.0" font-size="44" textLength="390.0" lengthAdjust="spacingAndGlyphs" fill="#f0f0f0">Total Gamma: 2,21</text><rect x="13.0" y="767.0" width="2534.0" height="199.0" fill="#000000"/><rect x="417.0" y="776.0" width="149.0" height="78.0" fill="rgb(4, 4, 4)"/><rect x="417.0" y="853.0" width="149.0" height="78.0" fill="rgb(1, 1, 1)"/><rect x="417.0" y="776.5" width="149" height="153.5" fill="none" stroke="#f4f4f4" stroke-width="2.4"/><text x="491.5" y="954.0" font-size="19" text-anchor="middle" fill="#f4f4f4">0</text><rect x="591.9" y="776.0" width="149.0" height="78.0" fill="rgb(22, 21, 22)"/><rect x="591.9" y="853.0" width="149.0" height="78.0" fill="rgb(28, 28, 28)"/><rect x="591.9" y="776.5" width="149" height="153.5" fill="none" stroke="#f4f4f4" stroke-width="2.4"/><text x="666.4" y="954.0" font-size="19" text-anchor="middle" fill="#f4f4f4">10</text><rect x="766.8" y="776.0" width="149.0" height="78.0" fill="rgb(46, 45, 43)"/><rect x="766.8" y="853.0" width="149.0" height="78.0" fill="rgb(51, 51, 51)"/><rect x="766.8" y="776.5" width="149" height="153.5" fill="none" stroke="#f4f4f4" stroke-width="2.4"/><text x="841.3" y="954.0" font-size="19" text-anchor="middle" fill="#f4f4f4">20</text><rect x="941.7" y="776.0" width="149.0" height="78.0" fill="rgb(80, 78, 74)"/><rect x="941.7" y="853.0" width="149.0" height="78.0" fill="rgb(77, 77, 77)"/><rect x="941.7" y="776.5" width="149" height="153.5" fill="none" stroke="#f4f4f4" stroke-width="2.4"/><text x="1016.2" y="954.0" font-size="19" text-anchor="middle" fill="#f4f4f4">30</text><rect x="1116.6" y="776.0" width="149.0" height="78.0" fill="rgb(108, 106, 100)"/><rect x="1116.6" y="853.0" width="149.0" height="78.0" fill="rgb(102, 102, 102)"/><rect x="1116.6" y="776.5" width="149" height="153.5" fill="none" stroke="#f4f4f4" stroke-width="2.4"/><text x="1191.1" y="954.0" font-size="19" text-anchor="middle" fill="#f4f4f4">40</text><rect x="1291.5" y="776.0" width="149.0" height="78.0" fill="rgb(135, 133, 126)"/><rect x="1291.5" y="853.0" width="149.0" height="78.0" fill="rgb(128, 128, 128)"/><rect x="1291.5" y="776.5" width="149" height="153.5" fill="none" stroke="#f4f4f4" stroke-width="2.4"/><text x="1366.0" y="954.0" font-size="19" text-anchor="middle" fill="#f4f4f4">50</text><rect x="1466.4" y="776.0" width="149.0" height="78.0" fill="rgb(160, 156, 148)"/><rect x="1466.4" y="853.0" width="149.0" height="78.0" fill="rgb(153, 153, 153)"/><rect x="1466.4" y="776.5" width="149" height="153.5" fill="none" stroke="#f4f4f4" stroke-width="2.4"/><text x="1540.9" y="954.0" font-size="19" text-anchor="middle" fill="#f4f4f4">60</text><rect x="1641.3" y="776.0" width="149.0" height="78.0" fill="rgb(185, 181, 172)"/><rect x="1641.3" y="853.0" width="149.0" height="78.0" fill="rgb(179, 179, 179)"/><rect x="1641.3" y="776.5" width="149" height="153.5" fill="none" stroke="#f4f4f4" stroke-width="2.4"/><text x="1715.8" y="954.0" font-size="19" text-anchor="middle" fill="#f4f4f4">70</text><rect x="1816.2" y="776.0" width="149.0" height="78.0" fill="rgb(208, 206, 196)"/><rect x="1816.2" y="853.0" width="149.0" height="78.0" fill="rgb(204, 204, 204)"/><rect x="1816.2" y="776.5" width="149" height="153.5" fill="none" stroke="#f4f4f4" stroke-width="2.4"/><text x="1890.7" y="954.0" font-size="19" text-anchor="middle" fill="#f4f4f4">80</text><rect x="1991.1" y="776.0" width="149.0" height="78.0" fill="rgb(230, 228, 218)"/><rect x="1991.1" y="853.0" width="149.0" height="78.0" fill="rgb(230, 230, 230)"/><rect x="1991.1" y="776.5" width="149" height="153.5" fill="none" stroke="#f4f4f4" stroke-width="2.4"/><text x="2065.6" y="954.0" font-size="19" text-anchor="middle" fill="#f4f4f4">90</text><rect x="2166.0" y="776.0" width="149.0" height="78.0" fill="rgb(255, 253, 242)"/><rect x="2166.0" y="853.0" width="149.0" height="78.0" fill="rgb(253, 253, 253)"/><rect x="2166.0" y="776.5" width="149" height="153.5" fill="none" stroke="#f4f4f4" stroke-width="2.4"/><text x="2240.5" y="954.0" font-size="19" text-anchor="middle" fill="#f4f4f4">100</text><text transform="translate(406,836) rotate(-90)" font-size="19" fill="#f4f4f4" textLength="53" lengthAdjust="spacingAndGlyphs">Actual</text><text transform="translate(406,923) rotate(-90)" font-size="19" fill="#f4f4f4" textLength="52" lengthAdjust="spacingAndGlyphs">Target</text><text x="33.5" y="1047.0" font-size="44.3" textLength="334.0" lengthAdjust="spacingAndGlyphs" fill="#f0f0f0">Current Reading</text><text x="33.5" y="1111.7" font-size="37" textLength="156.0" lengthAdjust="spacingAndGlyphs" fill="#f0f0f0">x: 0,3205</text><text x="33.5" y="1173.6" font-size="37" textLength="157.0" lengthAdjust="spacingAndGlyphs" fill="#f0f0f0">y: 0,3388</text><text x="33.5" y="1235.6" font-size="37" textLength="168.0" lengthAdjust="spacingAndGlyphs" fill="#f0f0f0">fL: 128,52</text><text x="33.5" y="1298.0" font-size="37" textLength="242.0" lengthAdjust="spacingAndGlyphs" fill="#f0f0f0">cd/m²: 440,35</text><rect x="509.3" y="999.3" width="444.6" height="326.7" fill="#e4e4e4"/><rect x="519.6" y="1009.5" width="424.1" height="308.5" fill="#323232"/><rect x="576.5" y="1013.7" width="363.2" height="262.1" fill="url(#cieBase)"/><rect x="576.5" y="1013.7" width="363.2" height="262.1" fill="url(#cieG)"/><rect x="576.5" y="1013.7" width="363.2" height="262.1" fill="url(#cieC)"/><rect x="576.5" y="1013.7" width="363.2" height="262.1" fill="url(#cieB)"/><rect x="576.5" y="1013.7" width="363.2" height="262.1" fill="url(#cieM)"/><rect x="576.5" y="1013.7" width="363.2" height="262.1" fill="url(#cieP)"/><rect x="576.5" y="1013.7" width="363.2" height="262.1" fill="url(#cieO)"/><rect x="576.5" y="1013.7" width="363.2" height="262.1" fill="url(#cieY)"/><rect x="576.5" y="1013.7" width="363.2" height="262.1" fill="url(#cieW)"/><rect x="576.5" y="1013.7" width="363.2" height="262.1" fill="none" stroke="#8a8a8a" stroke-width="2"/><line x1="591.6" y1="1275.8" x2="591.6" y2="1284.8" stroke="#d8d8d8" stroke-width="2"/><text x="591.6" y="1309.0" font-size="21.4" text-anchor="middle" fill="#e6e6e6">0,29</text><line x1="664.0" y1="1275.8" x2="664.0" y2="1284.8" stroke="#d8d8d8" stroke-width="2"/><text x="664.0" y="1309.0" font-size="21.4" text-anchor="middle" fill="#e6e6e6">0,3</text><line x1="736.4" y1="1275.8" x2="736.4" y2="1284.8" stroke="#d8d8d8" stroke-width="2"/><text x="736.4" y="1309.0" font-size="21.4" text-anchor="middle" fill="#e6e6e6">0,31</text><line x1="808.7" y1="1275.8" x2="808.7" y2="1284.8" stroke="#d8d8d8" stroke-width="2"/><text x="808.7" y="1309.0" font-size="21.4" text-anchor="middle" fill="#e6e6e6">0,32</text><line x1="881.1" y1="1275.8" x2="881.1" y2="1284.8" stroke="#d8d8d8" stroke-width="2"/><text x="881.1" y="1309.0" font-size="21.4" text-anchor="middle" fill="#e6e6e6">0,33</text><line x1="568.0" y1="1244.0" x2="576.5" y2="1244.0" stroke="#d8d8d8" stroke-width="2"/><text x="566.0" y="1251.5" font-size="21.4" text-anchor="end" fill="#e6e6e6">0,31</text><line x1="568.0" y1="1191.7" x2="576.5" y2="1191.7" stroke="#d8d8d8" stroke-width="2"/><text x="566.0" y="1199.2" font-size="21.4" text-anchor="end" fill="#e6e6e6">0,32</text><line x1="568.0" y1="1139.3" x2="576.5" y2="1139.3" stroke="#d8d8d8" stroke-width="2"/><text x="566.0" y="1146.8" font-size="21.4" text-anchor="end" fill="#e6e6e6">0,33</text><line x1="568.0" y1="1087.0" x2="576.5" y2="1087.0" stroke="#d8d8d8" stroke-width="2"/><text x="566.0" y="1094.5" font-size="21.4" text-anchor="end" fill="#e6e6e6">0,34</text><line x1="568.0" y1="1034.7" x2="576.5" y2="1034.7" stroke="#d8d8d8" stroke-width="2"/><text x="566.0" y="1042.2" font-size="21.4" text-anchor="end" fill="#e6e6e6">0,35</text><clipPath id="cieClip"><rect x="576.5" y="1013.7" width="363.2" height="262.1"/></clipPath><polyline points="610.0,1285.4 640.0,1263.2 680.0,1233.9 720.0,1205.2 760.0,1177.0 800.0,1149.3 840.0,1122.1 880.0,1095.5 920.0,1069.3 950.0,1050.0" fill="none" stroke="#000" stroke-width="4.5" clip-path="url(#cieClip)"/><rect x="747" y="1134" width="20.5" height="20.5" fill="#fff" stroke="#000" stroke-width="2.8"/><circle cx="786" cy="1124" r="6.8" fill="#1a1a1a" stroke="#000" stroke-width="1"/><circle cx="831.5" cy="1077" r="6.5" fill="#333" stroke="#111" stroke-width="1.4"/><circle cx="830" cy="1078.5" r="6.5" fill="#555" stroke="#111" stroke-width="1.4"/><circle cx="828.5" cy="1080" r="6.5" fill="#888" stroke="#111" stroke-width="1.4"/><circle cx="826.5" cy="1082" r="6.5" fill="#aaa" stroke="#111" stroke-width="1.4"/><circle cx="823.6" cy="1084.3" r="6.5" fill="#d8d8d8" stroke="#111" stroke-width="1.4"/><circle cx="813" cy="1093" r="6.3" fill="#ffffff" stroke="#111" stroke-width="1.4"/><rect x="963.3" y="977.8" width="1330.2" height="321.4" fill="#0e0e0e"/><rect x="964.8" y="979.3" width="1327.2" height="43.6" fill="url(#gHdr)"/><text x="1253.5" y="1010.2" font-size="22.3" text-anchor="middle" font-weight="700" textLength="12.0" lengthAdjust="spacingAndGlyphs" fill="#f6f6f6">0</text><text x="1358.4" y="1010.2" font-size="22.3" text-anchor="middle" font-weight="700" textLength="24.5" lengthAdjust="spacingAndGlyphs" fill="#f6f6f6">10</text><text x="1456.7" y="1010.2" font-size="22.3" text-anchor="middle" font-weight="700" textLength="24.5" lengthAdjust="spacingAndGlyphs" fill="#f6f6f6">20</text><text x="1555.0" y="1010.2" font-size="22.3" text-anchor="middle" font-weight="700" textLength="24.5" lengthAdjust="spacingAndGlyphs" fill="#f6f6f6">30</text><text x="1652.5" y="1010.2" font-size="22.3" text-anchor="middle" font-weight="700" textLength="24.5" lengthAdjust="spacingAndGlyphs" fill="#f6f6f6">40</text><text x="1751.0" y="1010.2" font-size="22.3" text-anchor="middle" font-weight="700" textLength="24.5" lengthAdjust="spacingAndGlyphs" fill="#f6f6f6">50</text><text x="1848.8" y="1010.2" font-size="22.3" text-anchor="middle" font-weight="700" textLength="24.5" lengthAdjust="spacingAndGlyphs" fill="#f6f6f6">60</text><text x="1947.3" y="1010.2" font-size="22.3" text-anchor="middle" font-weight="700" textLength="24.5" lengthAdjust="spacingAndGlyphs" fill="#f6f6f6">70</text><text x="2044.9" y="1010.2" font-size="22.3" text-anchor="middle" font-weight="700" textLength="24.5" lengthAdjust="spacingAndGlyphs" fill="#f6f6f6">80</text><text x="2143.3" y="1010.2" font-size="22.3" text-anchor="middle" font-weight="700" textLength="24.5" lengthAdjust="spacingAndGlyphs" fill="#f6f6f6">90</text><text x="2241.8" y="1010.2" font-size="22.3" text-anchor="middle" font-weight="700" textLength="36.0" lengthAdjust="spacingAndGlyphs" fill="#f6f6f6">100</text><rect x="964.8" y="1022.9" width="1326.2" height="39.3" fill="#404040"/><text x="984.0" y="1051.1" font-size="23.4" font-weight="700" textLength="92.5" lengthAdjust="spacingAndGlyphs" fill="#f4f4f4">x: CIE31</text><text x="1203.4" y="1051.1" font-size="24" fill="#f4f4f4">0,27</text><text x="1314.9" y="1051.1" font-size="24" fill="#f4f4f4">0,32</text><text x="1413.2" y="1051.1" font-size="24" fill="#f4f4f4">0,32</text><text x="1511.5" y="1051.1" font-size="24" fill="#f4f4f4">0,32</text><text x="1609.4" y="1051.1" font-size="24" fill="#f4f4f4">0,32</text><text x="1707.8" y="1051.1" font-size="24" fill="#f4f4f4">0,32</text><text x="1805.5" y="1051.1" font-size="24" fill="#f4f4f4">0,32</text><text x="1903.9" y="1051.1" font-size="24" fill="#f4f4f4">0,32</text><text x="2001.8" y="1051.1" font-size="24" fill="#f4f4f4">0,32</text><text x="2100.0" y="1051.1" font-size="24" fill="#f4f4f4">0,32</text><text x="2197.8" y="1051.1" font-size="24" fill="#f4f4f4">0,32</text><rect x="964.8" y="1062.2" width="1326.2" height="39.3" fill="#7e7e7e"/><text x="984.0" y="1090.4" font-size="23.4" font-weight="700" textLength="92.5" lengthAdjust="spacingAndGlyphs" fill="#f4f4f4">y: CIE31</text><text x="1203.4" y="1090.4" font-size="24" fill="#f4f4f4">0,28</text><text x="1314.9" y="1090.4" font-size="24" fill="#f4f4f4">0,33</text><text x="1413.2" y="1090.4" font-size="24" fill="#f4f4f4">0,34</text><text x="1511.5" y="1090.4" font-size="24" fill="#f4f4f4">0,34</text><text x="1609.4" y="1090.4" font-size="24" fill="#f4f4f4">0,34</text><text x="1707.8" y="1090.4" font-size="24" fill="#f4f4f4">0,34</text><text x="1805.5" y="1090.4" font-size="24" fill="#f4f4f4">0,34</text><text x="1903.9" y="1090.4" font-size="24" fill="#f4f4f4">0,34</text><text x="2001.8" y="1090.4" font-size="24" fill="#f4f4f4">0,34</text><text x="2100.0" y="1090.4" font-size="24" fill="#f4f4f4">0,34</text><text x="2197.8" y="1090.4" font-size="24" fill="#f4f4f4">0,34</text><rect x="964.8" y="1101.4" width="1326.2" height="39.3" fill="#404040"/><text x="984.0" y="1129.6" font-size="23.4" font-weight="700" textLength="16.5" lengthAdjust="spacingAndGlyphs" fill="#f4f4f4">Y</text><text x="1203.4" y="1129.6" font-size="24" fill="#f4f4f4">0,25</text><text x="1314.9" y="1129.6" font-size="24" fill="#f4f4f4">2,02</text><text x="1413.2" y="1129.6" font-size="24" fill="#f4f4f4">11,78</text><text x="1511.5" y="1129.6" font-size="24" fill="#f4f4f4">33,07</text><text x="1609.4" y="1129.6" font-size="24" fill="#f4f4f4">60,51</text><text x="1707.8" y="1129.6" font-size="24" fill="#f4f4f4">101,91</text><text x="1805.5" y="1129.6" font-size="24" fill="#f4f4f4">146,64</text><text x="1903.9" y="1129.6" font-size="24" fill="#f4f4f4">200,45</text><text x="2001.8" y="1129.6" font-size="24" fill="#f4f4f4">271,75</text><text x="2100.0" y="1129.6" font-size="24" fill="#f4f4f4">346,76</text><text x="2197.8" y="1129.6" font-size="24" fill="#f4f4f4">440,35</text><rect x="964.8" y="1140.7" width="1326.2" height="39.3" fill="#7e7e7e"/><text x="984.0" y="1168.9" font-size="23.4" font-weight="700" textLength="97.5" lengthAdjust="spacingAndGlyphs" fill="#f4f4f4">Target Y</text><text x="1203.4" y="1168.9" font-size="24" fill="#f4f4f4">0,00</text><text x="1314.9" y="1168.9" font-size="24" fill="#f4f4f4">4,55</text><text x="1413.2" y="1168.9" font-size="24" fill="#f4f4f4">14,58</text><text x="1511.5" y="1168.9" font-size="24" fill="#f4f4f4">31,82</text><text x="1609.4" y="1168.9" font-size="24" fill="#f4f4f4">58,51</text><text x="1707.8" y="1168.9" font-size="24" fill="#f4f4f4">95,05</text><text x="1805.5" y="1168.9" font-size="24" fill="#f4f4f4">140,27</text><text x="1903.9" y="1168.9" font-size="24" fill="#f4f4f4">196,04</text><text x="2001.8" y="1168.9" font-size="24" fill="#f4f4f4">265,90</text><text x="2100.0" y="1168.9" font-size="24" fill="#f4f4f4">348,45</text><text x="2197.8" y="1168.9" font-size="24" fill="#f4f4f4">440,35</text><rect x="964.8" y="1179.9" width="1326.2" height="39.3" fill="#404040"/><text x="984.0" y="1208.2" font-size="23.4" font-weight="700" textLength="195.0" lengthAdjust="spacingAndGlyphs" fill="#f4f4f4">Gamma Log/Log</text><text x="1203.4" y="1208.2" font-size="24" fill="#f4f4f4">1,28</text><text x="1314.9" y="1208.2" font-size="24" fill="#f4f4f4">2,36</text><text x="1413.2" y="1208.2" font-size="24" fill="#f4f4f4">2,25</text><text x="1511.5" y="1208.2" font-size="24" fill="#f4f4f4">2,14</text><text x="1609.4" y="1208.2" font-size="24" fill="#f4f4f4">2,17</text><text x="1707.8" y="1208.2" font-size="24" fill="#f4f4f4">2,12</text><text x="1805.5" y="1208.2" font-size="24" fill="#f4f4f4">2,15</text><text x="1903.9" y="1208.2" font-size="24" fill="#f4f4f4">2,19</text><text x="2001.8" y="1208.2" font-size="24" fill="#f4f4f4">2,16</text><text x="2100.0" y="1208.2" font-size="24" fill="#f4f4f4">2,32</text><text x="2197.8" y="1208.2" font-size="24" fill="#f4f4f4">2,27</text><rect x="964.8" y="1219.2" width="1326.2" height="39.3" fill="#7e7e7e"/><text x="984.0" y="1247.4" font-size="23.4" font-weight="700" textLength="46.5" lengthAdjust="spacingAndGlyphs" fill="#f4f4f4">CCT</text><text x="1203.4" y="1247.4" font-size="24" fill="#f4f4f4">11649,00</text><text x="1314.9" y="1247.4" font-size="24" fill="#f4f4f4">6269,00</text><text x="1413.2" y="1247.4" font-size="24" fill="#f4f4f4">5945,00</text><text x="1511.5" y="1247.4" font-size="24" fill="#f4f4f4">5922,00</text><text x="1609.4" y="1247.4" font-size="24" fill="#f4f4f4">5928,00</text><text x="1707.8" y="1247.4" font-size="24" fill="#f4f4f4">5932,00</text><text x="1805.5" y="1247.4" font-size="24" fill="#f4f4f4">5935,00</text><text x="1903.9" y="1247.4" font-size="24" fill="#f4f4f4">5941,00</text><text x="2001.8" y="1247.4" font-size="24" fill="#f4f4f4">5954,00</text><text x="2100.0" y="1247.4" font-size="24" fill="#f4f4f4">5977,00</text><text x="2197.8" y="1247.4" font-size="24" fill="#f4f4f4">6051,00</text><rect x="964.8" y="1258.4" width="1326.2" height="39.3" fill="#404040"/><text x="984.0" y="1286.7" font-size="23.4" font-weight="700" textLength="96.0" lengthAdjust="spacingAndGlyphs" fill="#f4f4f4">ΔE 2000</text><text x="1203.4" y="1286.7" font-size="24" fill="#f4f4f4">0,51</text><text x="1314.9" y="1286.7" font-size="24" fill="#f4f4f4">3,12</text><text x="1413.2" y="1286.7" font-size="24" fill="#f4f4f4">2,56</text><text x="1511.5" y="1286.7" font-size="24" fill="#f4f4f4">2,76</text><text x="1609.4" y="1286.7" font-size="24" fill="#f4f4f4">3,34</text><text x="1707.8" y="1286.7" font-size="24" fill="#f4f4f4">4,12</text><text x="1805.5" y="1286.7" font-size="24" fill="#f4f4f4">4,33</text><text x="1903.9" y="1286.7" font-size="24" fill="#f4f4f4">4,59</text><text x="2001.8" y="1286.7" font-size="24" fill="#f4f4f4">4,94</text><text x="2100.0" y="1286.7" font-size="24" fill="#f4f4f4">5,09</text><text x="2197.8" y="1286.7" font-size="24" fill="#f4f4f4">4,81</text><rect x="0.0" y="1330.0" width="2560.0" height="62.0" fill="#2a2a2a"/><rect x="1671.0" y="1330.0" width="570.0" height="62.0" fill="url(#gBBrest)"/><rect x="1.0" y="1330" width="149.7" height="61" rx="4" fill="url(#gBB)"/><rect x="6.2" y="1335" width="139.5" height="35.6" rx="3.5" fill="rgb(0,0,0)" stroke="rgba(0,0,0,0.25)" stroke-width="1"/><text x="76.0" y="1387.0" font-size="11.5" text-anchor="middle" font-weight="700" fill="#333">0</text><rect x="153.0" y="1330" width="149.7" height="61" rx="4" fill="url(#gBB)"/><rect x="158.2" y="1335" width="139.5" height="35.6" rx="3.5" fill="rgb(28,28,28)" stroke="rgba(0,0,0,0.25)" stroke-width="1"/><text x="228.0" y="1387.0" font-size="11.5" text-anchor="middle" font-weight="700" fill="#333">10</text><rect x="305.0" y="1330" width="149.7" height="61" rx="4" fill="url(#gBB)"/><rect x="310.2" y="1335" width="139.5" height="35.6" rx="3.5" fill="rgb(51,51,51)" stroke="rgba(0,0,0,0.25)" stroke-width="1"/><text x="380.0" y="1387.0" font-size="11.5" text-anchor="middle" font-weight="700" fill="#333">20</text><rect x="457.0" y="1330" width="149.7" height="61" rx="4" fill="url(#gBB)"/><rect x="462.2" y="1335" width="139.5" height="35.6" rx="3.5" fill="rgb(77,77,77)" stroke="rgba(0,0,0,0.25)" stroke-width="1"/><text x="532.0" y="1387.0" font-size="11.5" text-anchor="middle" font-weight="700" fill="#333">30</text><rect x="609.0" y="1330" width="149.7" height="61" rx="4" fill="url(#gBB)"/><rect x="614.2" y="1335" width="139.5" height="35.6" rx="3.5" fill="rgb(102,102,102)" stroke="rgba(0,0,0,0.25)" stroke-width="1"/><text x="684.0" y="1387.0" font-size="11.5" text-anchor="middle" font-weight="700" fill="#333">40</text><rect x="761.0" y="1330" width="149.7" height="61" rx="4" fill="url(#gBB)"/><rect x="766.2" y="1335" width="139.5" height="35.6" rx="3.5" fill="rgb(128,128,128)" stroke="rgba(0,0,0,0.25)" stroke-width="1"/><text x="836.0" y="1387.0" font-size="11.5" text-anchor="middle" font-weight="700" fill="#333">50</text><rect x="913.0" y="1330" width="149.7" height="61" rx="4" fill="url(#gBB)"/><rect x="918.2" y="1335" width="139.5" height="35.6" rx="3.5" fill="rgb(153,153,153)" stroke="rgba(0,0,0,0.25)" stroke-width="1"/><text x="988.0" y="1387.0" font-size="11.5" text-anchor="middle" font-weight="700" fill="#333">60</text><rect x="1065.0" y="1330" width="149.7" height="61" rx="4" fill="url(#gBB)"/><rect x="1070.2" y="1335" width="139.5" height="35.6" rx="3.5" fill="rgb(179,179,179)" stroke="rgba(0,0,0,0.25)" stroke-width="1"/><text x="1140.0" y="1387.0" font-size="11.5" text-anchor="middle" font-weight="700" fill="#333">70</text><rect x="1217.0" y="1330" width="149.7" height="61" rx="4" fill="url(#gBB)"/><rect x="1222.2" y="1335" width="139.5" height="35.6" rx="3.5" fill="rgb(204,204,204)" stroke="rgba(0,0,0,0.25)" stroke-width="1"/><text x="1292.0" y="1387.0" font-size="11.5" text-anchor="middle" font-weight="700" fill="#333">80</text><rect x="1369.0" y="1330" width="149.7" height="61" rx="4" fill="url(#gBB)"/><rect x="1374.2" y="1335" width="139.5" height="35.6" rx="3.5" fill="rgb(230,230,230)" stroke="rgba(0,0,0,0.25)" stroke-width="1"/><text x="1444.0" y="1387.0" font-size="11.5" text-anchor="middle" font-weight="700" fill="#333">90</text><rect x="1521.0" y="1330" width="150" height="61" rx="4" fill="url(#gBBsel)"/><rect x="1526.5" y="1334.5" width="139.5" height="36" rx="4" fill="#fff"/><text x="1596.0" y="1387.0" font-size="11.5" text-anchor="middle" font-weight="700" fill="#fff">100</text><rect x="2237" y="1330" width="48" height="60" rx="4" fill="url(#gCtl)"/><line x1="2237.0" y1="1348.0" x2="2285.0" y2="1348.0" stroke="#555" stroke-width="1"/><circle cx="2260" cy="1338.5" r="6.5" fill="url(#gKnob)" filter="url(#fBlur)"/><path d="M2255 1341 L2260 1336 L2265 1341 Z" fill="#222"/><rect x="2246" y="1354.5" width="29.5" height="29.5" rx="4" fill="#a8a8a8" stroke="#111" stroke-width="2.2"/><rect x="2254" y="1363" width="14" height="14" fill="#000"/><rect x="2286.4" y="1330" width="44.5" height="29.5" fill="url(#gCtl)"/><circle cx="2308.7" cy="1344.8" r="9.5" fill="url(#gKnob)" filter="url(#fBlur)"/><rect x="2331.5" y="1330" width="44.5" height="29.5" fill="url(#gCtl)"/><circle cx="2353.8" cy="1344.8" r="9.5" fill="url(#gKnob)" filter="url(#fBlur)"/><rect x="2376.6" y="1330" width="44.5" height="29.5" fill="url(#gCtl)"/><circle cx="2398.9" cy="1344.8" r="9.5" fill="url(#gKnob)" filter="url(#fBlur)"/><rect x="2421.7" y="1330" width="44.5" height="29.5" fill="url(#gCtl)"/><circle cx="2444.0" cy="1344.8" r="9.5" fill="url(#gKnob)" filter="url(#fBlur)"/><rect x="2466.8" y="1330" width="44.5" height="29.5" fill="url(#gCtl)"/><circle cx="2489.1" cy="1344.8" r="9.5" fill="url(#gKnob)" filter="url(#fBlur)"/><rect x="2512.5" y="1330" width="44" height="29.7" fill="url(#gDarkBtn)"/><circle cx="2535" cy="1344.5" r="9.5" fill="url(#gDarkKnob)" filter="url(#fBlur)"/><rect x="2304.5" y="1340.5" width="8" height="8" fill="#222"/><path d="M2352 1339.5 L2360 1345 L2352 1350.5 Z" fill="#222"/><path d="M2395 1339.5 H2393 V1350 H2395 M2405 1339.5 H2407 V1350 H2405" fill="none" stroke="#222" stroke-width="1.6"/><circle cx="2398.5" cy="1345" r="0.9" fill="#222"/><circle cx="2401.5" cy="1345" r="0.9" fill="#222"/><path d="M2440 1344.5 C2440 1341 2444.5 1341 2445 1344.5 C2445.5 1348 2450 1348 2450 1344.5 C2450 1341 2445.5 1341 2445 1344.5 C2444.5 1348 2440 1348 2440 1344.5 Z" fill="none" stroke="#222" stroke-width="1.8"/><path d="M2485.5 1345 A5 5 0 0 1 2494.5 1342" fill="none" stroke="#222" stroke-width="2"/><path d="M2494.5 1345 A5 5 0 0 1 2485.5 1348" fill="none" stroke="#222" stroke-width="2"/><path d="M2495.5 1338.5 L2496 1344 L2491 1342.5 Z M2484.5 1351 L2484 1345.5 L2489 1347 Z" fill="#222"/><rect x="2286.4" y="1361" width="272" height="28.7" rx="2" fill="url(#gCtl)"/><line x1="2422.5" y1="1361.0" x2="2422.5" y2="1389.7" stroke="#555" stroke-width="1"/><circle cx="2317" cy="1375.8" r="9" fill="url(#gKnob)" filter="url(#fBlur)"/><circle cx="2530" cy="1375.8" r="9" fill="url(#gKnob)" filter="url(#fBlur)"/><path d="M2318 1371 L2314 1375.8 L2318 1380.6 M2322 1371 L2318 1375.8 L2322 1380.6" fill="none" stroke="#333" stroke-width="1.5"/><path d="M2528 1371 L2532 1375.8 L2528 1380.6 M2524 1371 L2528 1375.8 L2524 1380.6" fill="none" stroke="#333" stroke-width="1.5"/><text x="2344.0" y="1384.5" font-size="25" font-weight="700" textLength="51.0" lengthAdjust="spacingAndGlyphs" fill="#2e2e2e">Back</text><text x="2450.5" y="1384.5" font-size="25" font-weight="700" textLength="52.0" lengthAdjust="spacingAndGlyphs" fill="#2e2e2e">Next</text><rect x="2555.5" y="88.0" width="4.5" height="1304.0" fill="url(#gRS)"/>
</svg>
</div></body></html>
